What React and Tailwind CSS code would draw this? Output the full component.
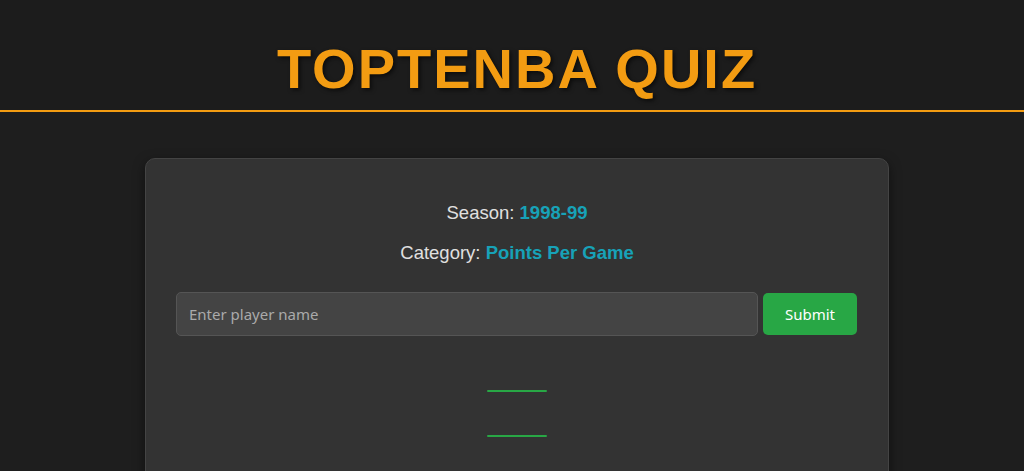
import React, { useState } from 'react';

const SLOTS = Array.from({ length: 10 }, (_, i) => i);

const App = () => {
    const [guess, setGuess] = useState('');

    return (
        <div className="min-h-[471px] bg-[#1e1e1e] font-['Liberation_Sans',Arial,sans-serif] text-[#e0e0e0]">
            <header className="bg-[#1c1c1c] border-b-2 border-[#f39c12] pl-[10px] pt-[37px] h-[112px]">
                <h1 className="text-center text-[56px] leading-[64px] font-bold tracking-[2px] text-[#f39c12] [text-shadow:2px_2px_4px_rgba(0,0,0,0.6)]">
                    TOPTENBA QUIZ
                </h1>
            </header>

            <main className="flex justify-center pl-[10px] pt-[46px]">
                <div className="w-[744px] bg-[#333333] border border-[#444] rounded-[10px] shadow-[0_4px_12px_rgba(0,0,0,0.5)] px-[30px] pt-[40px] pb-[40px]">
                    <div className="flex flex-col gap-[13px] text-center text-[18.5px] leading-[27px]">
                        <p>
                            Season: <span className="font-bold text-[#17a2b8]">1998-99</span>
                        </p>
                        <p>
                            Category: <span className="font-bold text-[#17a2b8]">Points Per Game</span>
                        </p>
                    </div>

                    <div className="flex items-center gap-[5px] mt-[26px] pr-[1px] font-['Noto_Sans',sans-serif]">
                        <input
                            value={guess}
                            onChange={(e) => setGuess(e.target.value)}
                            placeholder="Enter player name"
                            className="flex-1 h-[44px] bg-[#444] border border-[#555] rounded-[5px] px-[12px] text-[15px] text-white placeholder:text-[#aaa] outline-none"
                        />
                        <button className="w-[94px] h-[42px] bg-[#28a745] rounded-[5px] text-white text-[15px]">
                            Submit
                        </button>
                    </div>

                    <ul className="flex flex-col items-center gap-[43px] mt-[54px]">
                        {SLOTS.map((i) => (
                            <li key={i} className="w-[60px] h-[2px] bg-[#28a745] rounded-full" />
                        ))}
                    </ul>
                </div>
            </main>
        </div>
    );
};

export default App;
